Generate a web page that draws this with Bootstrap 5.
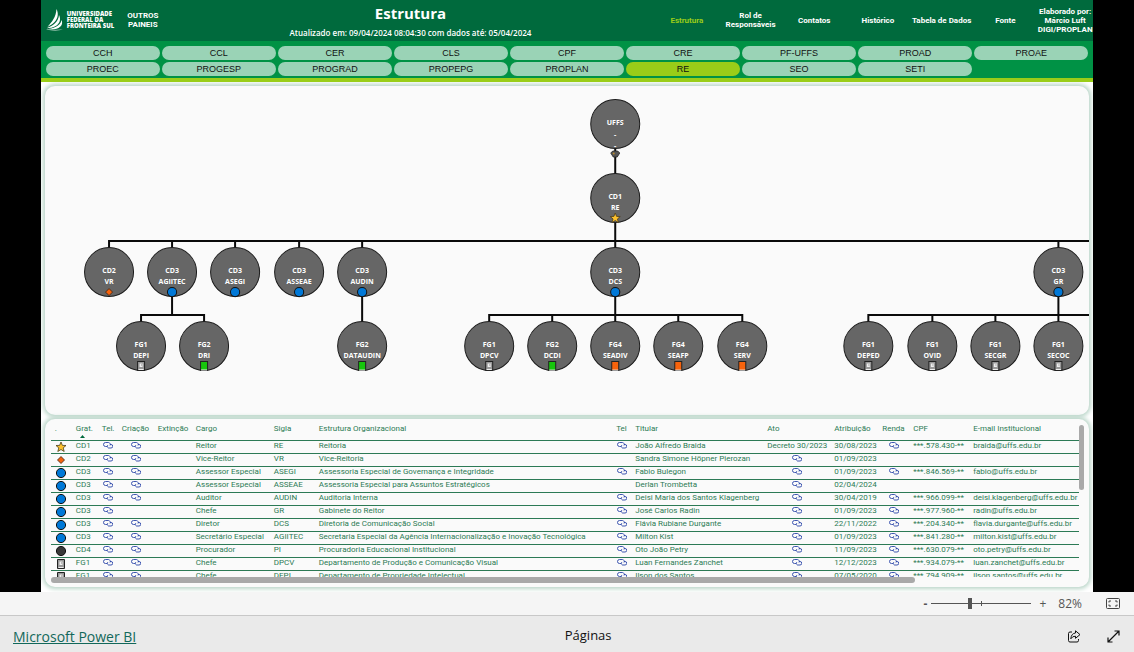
<!DOCTYPE html>
<html lang="pt-BR">
<head>
<meta charset="utf-8">
<meta name="viewport" content="width=device-width, initial-scale=1">
<title>Estrutura - UFFS</title>
<link href="https://cdn.jsdelivr.net/npm/bootstrap@5.3.0/dist/css/bootstrap.min.css" rel="stylesheet">
<style>
  :root { --dark: #006a3d; --mid: #009245; --lime: #9acd18; --pale: #9ad3b6; --ink: #2c7a55; --glow: #b9d5c8; }
  body { font-family: "Open Sans", "Noto Sans", sans-serif; background: #000; }
  .report { aspect-ratio: 16 / 9; background: #fff; max-width: 100%; }
  .report-head {
    display: grid; grid-template-columns: 79fr 46fr 489fr 382fr 56fr;
    height: 41px; background: var(--dark); color: #fff;
    font: 700 8px/9px Roboto, sans-serif; text-align: center;
  }
  .report-head a { color: #fff; text-decoration: none; }
  .report-head a.current { color: var(--lime); }
  .brand { gap: 4px; padding-left: 5px; font: 800 6px/6px "Open Sans", sans-serif; text-align: left; white-space: nowrap; }
  .report-head .other-link { font: 700 8px/9px Roboto, sans-serif; }
  .report-title { font: 700 15px/20px "Open Sans", sans-serif; margin: 3px 0 0; }
  .report-date { font: 600 8px/10px "Open Sans", sans-serif; margin: 5px 0 0; }
  .pages { display: grid; grid-template-columns: repeat(6, 1fr); align-items: center; }
  .units {
    display: grid; grid-template-columns: repeat(9, 1fr); gap: 2px; padding: 5px 5px 2px;
    background: var(--mid); border-bottom: 4px solid var(--lime);
  }
  .unit {
    border: 0; border-radius: 7px; height: 14px; padding: 0; background: var(--pale); color: #111;
    font: 9px/14px "Liberation Sans", Arial, sans-serif;
  }
  .unit.chosen { background: var(--lime); }
  .report-body { padding: 4px 4px 5px; gap: 4px; background: #fff; }
  .panel { background: #fafafa; border-radius: 10px; box-shadow: 0 0 4px 2px var(--glow); }
  .org text { font: 700 7px "Open Sans", sans-serif; fill: #fff; text-anchor: middle; }
  .grid-panel { display: grid; grid-template-columns: 1fr 10px; grid-template-rows: 154px 7px; padding: 4px 0 3px 6px; }
  .staff { table-layout: fixed; width: 100%; color: var(--ink); font: 8px/10px Roboto, sans-serif; white-space: nowrap; border-collapse: separate; border-spacing: 0; }
  .staff th, .staff td { padding: 0 6px 0 1px; height: 13px; border-bottom: 1px solid #2c7a55; vertical-align: top; font-weight: 400; }
  .staff th { height: 18px; padding-top: 1px; }
  .staff td:first-child { padding: 1px 0 0 5px; }
  .staff svg { display: block; }
  .staff a { display: block; padding-top: 1px; }
  .staff a svg { margin: 0 auto; }
  .bar { background: #a9a9a9; border-radius: 3px; }
  .bar-x { width: 84%; height: 6px; }
  .bar-y { width: 5px; height: 42%; margin-top: 2px; }
  .zoom-bar { height: 24px; background: #f5f5f5; border-bottom: 1px solid #c8c8c8; padding-right: 14px; color: #555; font-size: 12px; }
  .plain { border: 0; background: none; padding: 0; color: inherit; line-height: 16px; }
  .zoom-range {
    appearance: none; width: 100px; height: 12px; margin: 0;
    background: linear-gradient(#555, #555) 50px 50% / 1px 5px no-repeat, linear-gradient(#555, #555) 0 50% / 100% 1px no-repeat;
  }
  .zoom-range::-webkit-slider-thumb { appearance: none; width: 4px; height: 11px; background: #555; }
  .foot { height: 36px; background: #eaeaea; padding: 4px 14px 0 13px; font-size: 13px; font-weight: 500; color: #111; }
  .foot a { color: #12685a; font-size: 14px; font-weight: 400; }
  .foot-tools { width: 80px; gap: 26px; }
</style>
</head>
<body>
<div class="d-flex flex-column vh-100">
  <div class="flex-grow-1 d-flex justify-content-center overflow-hidden">
    <main class="report h-100 d-flex flex-column overflow-hidden">
      <header class="report-head">
        <div class="brand d-flex align-items-center">
          <svg width="17" height="22" viewBox="0 0 17 22" fill="#fff" aria-hidden="true">
            <path d="M10.500 0 C12.500 4 12.400 9 8.500 13 C6 15.500 3.500 17 1.500 17.700 C6 13 10 8 10.500 0Z"/>
            <path d="M13 6 C15 10 14 14 10.500 16.500 C7.500 18.600 3.500 19.200 .5 19.200 C6.500 17 12.500 13 13 6Z"/>
            <path d="M15.500 11 C17 14.500 15.500 17.500 12.500 19 C9 20.600 4 20.800 0 20.300 C7 19.600 14.500 17.500 15.500 11Z"/>
            <path d="M3 21 C9 21 13 20.500 17 20.500 C13 21.800 8 22 3 21Z" opacity=".6"/>
          </svg>
          <span>UNIVERSIDADE<br>FEDERAL DA<br>FRONTEIRA SUL</span>
        </div>
        <a class="other-link align-self-center" href="#">OUTROS PAINEIS</a>
        <div>
          <h1 class="report-title">Estrutura</h1>
          <p class="report-date">Atualizado em: 09/04/2024 08:04:30 com dados até: 05/04/2024</p>
        </div>
        <nav class="pages">
          <a class="current" href="#">Estrutura</a>
          <a href="#">Rol de Responsáveis</a>
          <a href="#">Contatos</a>
          <a href="#">Histórico</a>
          <a href="#">Tabela de Dados</a>
          <a href="#">Fonte</a>
        </nav>
        <div class="align-self-center text-nowrap">Elaborado por:<br>Márcio Luft<br>DIGI/PROPLAN</div>
      </header>

      <div class="units">
        <button class="unit">CCH</button><button class="unit">CCL</button><button class="unit">CER</button>
        <button class="unit">CLS</button><button class="unit">CPF</button><button class="unit">CRE</button>
        <button class="unit">PF-UFFS</button><button class="unit">PROAD</button><button class="unit">PROAE</button>
        <button class="unit">PROEC</button><button class="unit">PROGESP</button><button class="unit">PROGRAD</button>
        <button class="unit">PROPEPG</button><button class="unit">PROPLAN</button><button class="unit chosen">RE</button>
        <button class="unit">SEO</button><button class="unit">SETI</button>
      </div>

      <div class="report-body d-flex flex-column flex-grow-1 overflow-hidden">
        <section class="panel flex-grow-1 overflow-hidden">
          <svg id="org" class="org d-block w-100" viewBox="45 86 1044 329" role="img" aria-label="Organograma">
            <g fill="none" stroke="#0a0a0a" stroke-width="2">
              <path d="M615 148V174M615 222V248M109 248V241H1100M172 241V248M235 241V248M299 241V248M362 241V248M1058 241V248"/>
              <path d="M172 296V315M141 322V315H204V322M362 296V322"/>
              <path d="M615 296V322M489 322V315H742V322M552 315V322M678 315V322"/>
              <path d="M1058 296V322M868 322V315H1100M932 315V322M995 315V322"/>
            </g>
          </svg>
        </section>

        <section class="panel grid-panel flex-shrink-0">
          <div class="overflow-hidden">
            <table class="staff">
              <colgroup>
                <col style="width:24px"><col style="width:26px"><col style="width:20px"><col style="width:36px"><col style="width:38px">
                <col style="width:78px"><col style="width:45px"><col><col style="width:19px"><col style="width:132px">
                <col style="width:67px"><col style="width:48px"><col style="width:31px"><col style="width:60px"><col style="width:107px">
              </colgroup>
              <thead>
                <tr>
                  <th class="ps-1">.</th>
                  <th>Grat.<svg class="ms-1" width="5" height="4" viewBox="0 0 5 4" fill="#006a3d"><path d="M0 4L2.500 1L5 4Z"/></svg></th>
                  <th>Tel.</th><th>Criação</th><th>Extinção</th><th>Cargo</th><th>Sigla</th><th>Estrutura Organizacional</th>
                  <th>Tel</th><th>Titular</th><th>Ato</th><th>Atribuição</th><th>Renda</th><th>CPF</th><th>E-mail Institucional</th>
                </tr>
              </thead>
              <tbody id="rows"></tbody>
            </table>
          </div>
          <div><div class="bar bar-y"></div></div>
          <div class="bar bar-x"></div>
        </section>
      </div>
    </main>
  </div>

  <div class="zoom-bar d-flex align-items-center justify-content-end flex-shrink-0">
    <button class="plain me-1 fw-bold" aria-label="Reduzir">-</button>
    <input class="zoom-range" type="range" min="0" max="100" value="38" aria-label="Zoom">
    <button class="plain ms-1 px-1" aria-label="Ampliar">+</button>
    <button class="plain ms-2 me-4">82%</button>
    <button class="plain" aria-label="Ajustar à página">
      <svg class="d-block" width="14" height="11" viewBox="0 0 14 11" fill="none" stroke="#444"><rect x=".5" y=".5" width="13" height="10" rx="1"/><path d="M3 4.500V3H5M9 3H11V4.500M11 6.500V8H9M5 8H3V6.500"/></svg>
    </button>
  </div>
  <footer class="foot d-flex align-items-center justify-content-between flex-shrink-0">
    <a href="#">Microsoft Power BI</a>
    <span>Páginas</span>
    <div class="foot-tools d-flex justify-content-end align-items-center">
      <button class="plain" aria-label="Compartilhar">
        <svg class="d-block" width="14" height="13" viewBox="0 0 14 13" fill="none" stroke="#111" stroke-linejoin="round"><path d="M5 2H3Q1.500 2 1.500 3.500V10.500Q1.500 12 3 12H10Q11.500 12 11.500 10.500V9"/><path d="M8.500 .8L13 4.600L8.500 8.300V6.200Q5.500 6 3.800 8.800Q4.300 3.400 8.500 3Z"/></svg>
      </button>
      <button class="plain" aria-label="Tela inteira">
        <svg class="d-block" width="13" height="13" viewBox="0 0 13 13" fill="none" stroke="#111" stroke-width="1.200"><path d="M1 12L12 1M7.500 1H12V5.500M1 7.500V12H5.500"/></svg>
      </button>
    </div>
  </footer>
</div>

<script src="https://cdn.jsdelivr.net/npm/bootstrap@5.3.0/dist/js/bootstrap.bundle.min.js"></script>
<script>
  // Grade symbols, each drawn around its own centre.
  const marks = {
    star: '<path d="M0-5L1.400-1.600L5-1.500L2.200 .9L3.200 4.500L0 2.500L-3.200 4.500L-2.200 .9L-5-1.500L-1.400-1.600Z" fill="#fcc12d" stroke="#4a3c1c" stroke-width=".8"/>',
    diamond: '<path d="M0-3.500L3.500 0L0 3.500L-3.500 0Z" fill="#f7630c" stroke="#3a2010" stroke-width=".8"/>',
    blue: '<circle r="4.600" fill="#0078d7" stroke="#111"/>',
    black: '<circle r="4.600" fill="#383838" stroke="#111"/>',
    gray: '<path d="M-3.500-4.500H3.500V4.500H-3.500Z" fill="#999" stroke="#222"/><path d="M-1.500-2.500H1.500V1H-1.500ZM-2.500 3H2.500V4H-2.500Z" fill="#eee"/><path d="M0-1.500H1V-.5H0Z" fill="#888"/>',
    green: '<path d="M-3.500-4.500H3.500V4.500H-3.500Z" fill="#16c60c" stroke="#222"/><path d="M-3 3.500H3V4.500H-3Z" fill="#eee"/>',
    orange: '<path d="M-3.500-4.500H3.500V4.500H-3.500Z" fill="#f7630c" stroke="#222"/><path d="M-3 3.500H3V4.500H-3Z" fill="#eee"/>',
    gem: '<path d="M-4.500-1L-2.500-3H2.500L4.500-1L2 3H-2Z" fill="#555" stroke="#222" stroke-width=".8"/><circle cx="-1.500" cy="-.5" r="1" fill="#b98a2e"/>'
  };
  const nodes = [
    [615, 197, 'CD1', 'RE', 'star'],
    [109, 271, 'CD2', 'VR', 'diamond'], [172, 271, 'CD3', 'AGIITEC', 'blue'], [235, 271, 'CD3', 'ASEGI', 'blue'],
    [299, 271, 'CD3', 'ASSEAE', 'blue'], [362, 271, 'CD3', 'AUDIN', 'blue'], [615, 271, 'CD3', 'DCS', 'blue'], [1058, 271, 'CD3', 'GR', 'blue'],
    [141, 345, 'FG1', 'DEPI', 'gray'], [204, 345, 'FG2', 'DRI', 'green'], [362, 345, 'FG2', 'DATAUDIN', 'green'],
    [489, 345, 'FG1', 'DPCV', 'gray'], [552, 345, 'FG2', 'DCDI', 'green'], [615, 345, 'FG4', 'SEADIV', 'orange'],
    [678, 345, 'FG4', 'SEAFP', 'orange'], [742, 345, 'FG4', 'SERV', 'orange'],
    [868, 345, 'FG1', 'DEPED', 'gray'], [932, 345, 'FG1', 'OVID', 'gray'], [995, 345, 'FG1', 'SECGR', 'gray'], [1058, 345, 'FG1', 'SECOC', 'gray']
  ];
  const disc = '<circle cy="1" r="24.500" fill="#666" stroke="#1c1c1c"/>';
  document.getElementById('org').insertAdjacentHTML('beforeend',
    `<g transform="translate(615 123)">${disc}<text y="2">UFFS</text><text y="14">-</text><text y="25">-</text><g transform="translate(0 31)">${marks.gem}</g></g>` +
    nodes.map(([x, y, grade, unit, mark]) =>
      `<g transform="translate(${x} ${y})">${disc}<text y="2">${grade}</text><text y="13">${unit}</text><g transform="translate(0 21)">${marks[mark]}</g></g>`).join(''));

  const link = '<a href="#" aria-label="Abrir"><svg width="10" height="7" viewBox="0 0 10 7" fill="none" stroke="#2a45a8" stroke-width=".9"><path d="M4 4.500H2.500A2 2 0 0 1 2.500 .5H5.500A2 2 0 0 1 7 3.500M5 3A1.800 1.800 0 0 0 5.500 6H8A1.600 1.600 0 0 0 8 2.500H7"/></svg></a>';
  // "@" stands for a link cell.
  const people = [
    ['star', 'CD1', '@', '@', '', 'Reitor', 'RE', 'Reitoria', '@', 'João Alfredo Braida', 'Decreto 30/2023', '30/08/2023', '@', '***.578.430-**', 'braida@uffs.edu.br'],
    ['diamond', 'CD2', '@', '@', '', 'Vice-Reitor', 'VR', 'Vice-Reitoria', '', 'Sandra Simone Höpner Pierozan', '@', '01/09/2023', '', '', ''],
    ['blue', 'CD3', '@', '@', '', 'Assessor Especial', 'ASEGI', 'Assessoria Especial de Governança e Integridade', '@', 'Fabio Bulegon', '@', '01/09/2023', '@', '***.846.569-**', 'fabio@uffs.edu.br'],
    ['blue', 'CD3', '@', '@', '', 'Assessor Especial', 'ASSEAE', 'Assessoria Especial para Assuntos Estratégicos', '', 'Derlan Trombetta', '@', '02/04/2024', '', '', ''],
    ['blue', 'CD3', '@', '@', '', 'Auditor', 'AUDIN', 'Auditoria Interna', '@', 'Deisi Maria dos Santos Klagenberg', '@', '30/04/2019', '@', '***.966.099-**', 'deisi.klagenberg@uffs.edu.br'],
    ['blue', 'CD3', '@', '', '', 'Chefe', 'GR', 'Gabinete do Reitor', '@', 'José Carlos Radin', '@', '01/09/2023', '@', '***.977.960-**', 'radin@uffs.edu.br'],
    ['blue', 'CD3', '@', '@', '', 'Diretor', 'DCS', 'Diretoria de Comunicação Social', '@', 'Flávia Rubiane Durgante', '@', '22/11/2022', '@', '***.204.340-**', 'flavia.durgante@uffs.edu.br'],
    ['blue', 'CD3', '@', '@', '', 'Secretário Especial', 'AGIITEC', 'Secretaria Especial da Agência Internacionalização e Inovação Tecnológica', '@', 'Milton Kist', '@', '01/09/2023', '@', '***.841.280-**', 'milton.kist@uffs.edu.br'],
    ['black', 'CD4', '@', '@', '', 'Procurador', 'PI', 'Procuradoria Educacional Institucional', '@', 'Oto João Petry', '@', '11/09/2023', '@', '***.630.079-**', 'oto.petry@uffs.edu.br'],
    ['gray', 'FG1', '@', '@', '', 'Chefe', 'DPCV', 'Departamento de Produção e Comunicação Visual', '@', 'Luan Fernandes Zanchet', '@', '12/12/2023', '@', '***.934.079-**', 'luan.zanchet@uffs.edu.br'],
    ['gray', 'FG1', '@', '@', '', 'Chefe', 'DEPI', 'Departamento de Propriedade Intelectual', '@', 'Ilson dos Santos', '@', '07/05/2020', '@', '***.794.909-**', 'ilson.santos@uffs.edu.br']
  ];
  document.getElementById('rows').innerHTML = people.map(([mark, ...cells]) =>
    `<tr><td><svg width="10" height="10" viewBox="-5 -5 10 10">${marks[mark]}</svg></td>` +
    cells.map(c => `<td>${c === '@' ? link : c}</td>`).join('') + '</tr>').join('');
</script>
</body>
</html>
